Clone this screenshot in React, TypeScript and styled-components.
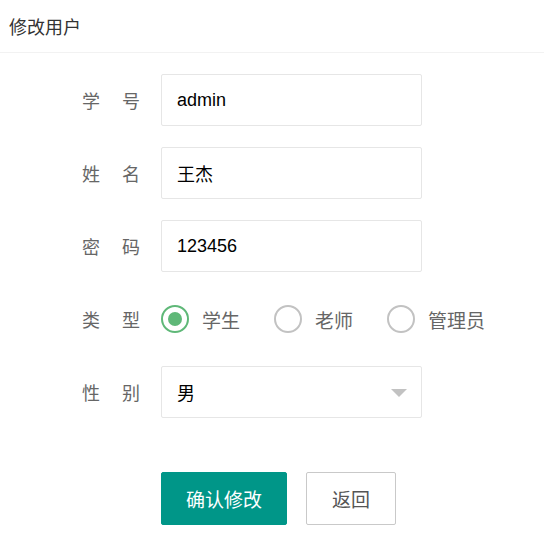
import styled, { createGlobalStyle } from "styled-components";

const GlobalStyle = createGlobalStyle`
    body {
        margin: 0;
        background: #fff;
        font-family: "Liberation Sans", "Noto Sans CJK SC", sans-serif;
    }
`;

const Page = styled.div`
    width: 544px;
    height: 557px;
    background: #fff;
`;
const Header = styled.div`
    height: 52px;
    border-bottom: 1px solid #f2f2f2;
    padding-left: 9px;
    display: flex;
    align-items: center;
    font-size: 18px;
    color: #333;
`;
const Form = styled.div`
    padding: 21px 0 0 82px;
`;
const Row = styled.div`
    display: flex;
    align-items: center;
    height: 52px;
    margin-bottom: 21px;
`;
const Label = styled.div`
    width: 58px;
    margin-right: 21px;
    display: flex;
    justify-content: space-between;
    font-size: 18px;
    color: #666;
`;
const Input = styled.input`
    box-sizing: border-box;
    width: 261px;
    height: 52px;
    border: 1px solid #e6e6e6;
    border-radius: 2px;
    padding: 0 15px;
    font-family: "Liberation Sans", "Noto Sans CJK SC", sans-serif;
    font-size: 18px;
    color: #000;
    outline: none;
`;
const Select = styled.div`
    box-sizing: border-box;
    width: 261px;
    height: 52px;
    border: 1px solid #e6e6e6;
    border-radius: 2px;
    padding: 0 14px 0 15px;
    display: flex;
    align-items: center;
    justify-content: space-between;
    font-size: 18px;
    color: #000;
`;
const Arrow = styled.span`
    width: 0;
    height: 0;
    border-left: 8px solid transparent;
    border-right: 8px solid transparent;
    border-top: 8px solid #c2c2c2;
    margin-top: 2px;
`;
const Radio = styled.div`
    display: flex;
    align-items: center;
    margin-right: 34px;
    font-size: 19px;
    color: #666;
`;
const Circle = styled.span<{ $on?: boolean }>`
    box-sizing: border-box;
    width: 28px;
    height: 28px;
    border-radius: 50%;
    border: 2px solid ${(p) => (p.$on ? "#5FB878" : "#c2c2c2")};
    margin-right: 13px;
    display: flex;
    align-items: center;
    justify-content: center;
    &::after {
        content: "";
        display: ${(p) => (p.$on ? "block" : "none")};
        width: 14px;
        height: 14px;
        border-radius: 50%;
        background: #5FB878;
    }
`;
const Buttons = styled.div`
    display: flex;
    padding-left: 79px;
    margin-top: 54px;
    gap: 19px;
`;
const Button = styled.button<{ $primary?: boolean }>`
    box-sizing: border-box;
    height: 53px;
    padding: 0 ${(p) => (p.$primary ? 24 : 25)}px;
    border-radius: 2px;
    font-family: "Liberation Sans", "Noto Sans CJK SC", sans-serif;
    font-size: 19px;
    border: 1px solid ${(p) => (p.$primary ? "#009688" : "#c9c9c9")};
    background: ${(p) => (p.$primary ? "#009688" : "#fff")};
    color: ${(p) => (p.$primary ? "#fff" : "#555")};
`;

function FieldLabel({ a, b }: { a: string; b: string }) {
    return (
        <Label>
            <span>{a}</span>
            <span>{b}</span>
        </Label>
    );
}

export default function App() {
    return (
        <Page>
            <GlobalStyle />
            <Header>修改用户</Header>
            <Form>
                <Row>
                    <FieldLabel a="学" b="号" />
                    <Input defaultValue="admin" />
                </Row>
                <Row>
                    <FieldLabel a="姓" b="名" />
                    <Input defaultValue="王杰" />
                </Row>
                <Row>
                    <FieldLabel a="密" b="码" />
                    <Input defaultValue="123456" />
                </Row>
                <Row>
                    <FieldLabel a="类" b="型" />
                    <Radio><Circle $on />学生</Radio>
                    <Radio><Circle />老师</Radio>
                    <Radio><Circle />管理员</Radio>
                </Row>
                <Row>
                    <FieldLabel a="性" b="别" />
                    <Select>
                        <span>男</span>
                        <Arrow />
                    </Select>
                </Row>
                <Buttons>
                    <Button $primary>确认修改</Button>
                    <Button>返回</Button>
                </Buttons>
            </Form>
        </Page>
    );
}
